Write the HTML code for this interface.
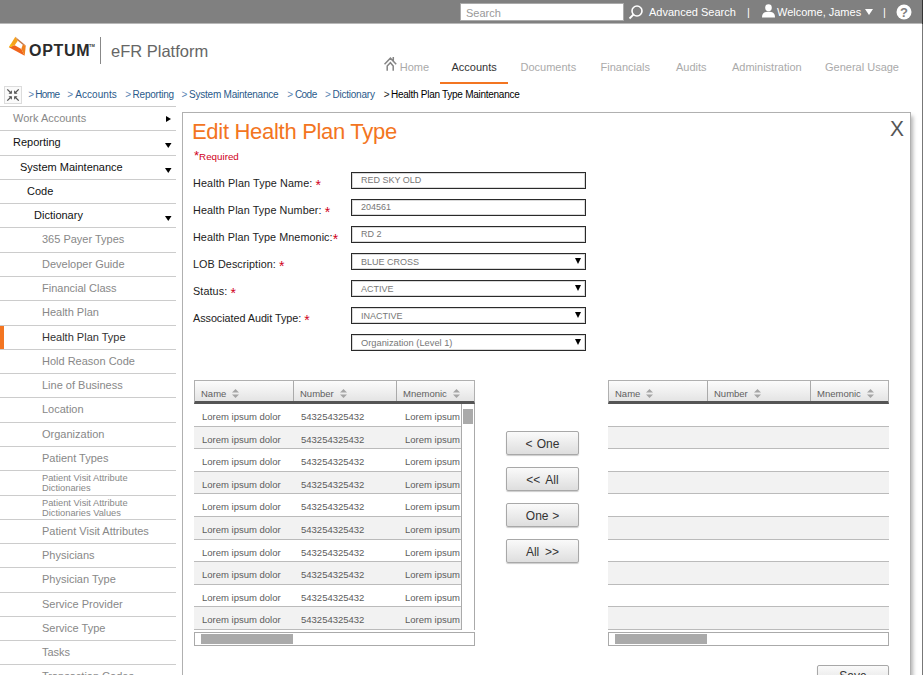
<!DOCTYPE html>
<html>
<head>
<meta charset="utf-8">
<title>Edit Health Plan Type</title>
<style>
*{box-sizing:border-box;margin:0;padding:0}
html,body{width:923px;height:675px;overflow:hidden;background:#fff;font-family:"Liberation Sans",Arial,sans-serif;color:#333}
.abs{position:absolute}
#topbar{position:absolute;left:0;top:0;width:923px;height:24px;background:#808080;border-bottom:1px solid #b8b8b8}
#search{position:absolute;left:460px;top:3px;width:164px;height:18px;background:#fff;border:1px solid #aaa;color:#999;font-size:11px;line-height:18px;padding-left:5px}
.tb{position:absolute;top:0;height:24px;line-height:24px;color:#fff;font-size:11px;white-space:nowrap}
#rightedge{position:absolute;left:922px;top:0;width:1px;height:675px;background:#777}
#rightedge i{display:block;height:24px;background:#333}
#logo{position:absolute;left:29px;top:41px;font-size:16px;font-weight:bold;color:#2b2b2b;letter-spacing:.7px;line-height:20px}
#logosep{position:absolute;left:100px;top:37px;width:1px;height:27px;background:#888}
#efr{position:absolute;left:111px;top:39.5px;font-size:16.5px;color:#666;line-height:22px;white-space:nowrap}
.nav{position:absolute;top:59px;font-size:11px;color:#aaa;line-height:16px;white-space:nowrap}
.nav.on{color:#333}
#navline{position:absolute;left:440px;top:82px;width:68px;height:2px;background:#f37521}
#bcicon{position:absolute;left:4px;top:86px;width:18px;height:18px;border:1px solid #dcdcdc;background:#fafafa}
.bc{position:absolute;top:88px;font-size:10px;line-height:13px;color:#2a5a8a;white-space:nowrap;letter-spacing:-.1px}
.bc.last{color:#000}.bc.g{color:#5a86b4}.bc.g.last{color:#222}
#side{position:absolute;left:0;top:106px;width:176px}
.si{position:relative;height:24.29px;border-top:1px solid #ccc;font-size:11px;line-height:22px;color:#888;white-space:nowrap}
.si.d{color:#111}
.si.two{font-size:9.3px;line-height:10px;padding-top:2px}
.si .ar{position:absolute;left:166px;top:9px}.si .ar.dn{left:165px;top:12px}
#panel{position:absolute;left:182px;top:112px;width:729px;height:580px;background:#fff;border:1px solid #b0b0b0;box-shadow:3px 3px 4px -1px rgba(0,0,0,.3)}
h1{position:absolute;left:192px;top:118px;letter-spacing:-.3px;font-size:22px;font-weight:normal;color:#f37521;line-height:27px;white-space:nowrap}
#close{position:absolute;left:890px;top:116.5px;font-size:22px;color:#555;line-height:24px;transform:scaleX(.95);transform-origin:0 0}
#req{position:absolute;left:194px;top:151px;font-size:9.8px;color:#d0021b;line-height:11px}
.lb{position:absolute;left:193px;font-size:10.8px;color:#222;line-height:13px;white-space:nowrap}
.lb b{color:#d0021b;font-weight:normal;font-size:14px;line-height:8px;vertical-align:-3px}
.inp{position:absolute;left:351px;width:235px;height:17px;border:1px solid #2a2a2a;box-shadow:inset 0 0 0 1px rgba(0,0,0,.15);background:#fff;font-size:9px;color:#777;line-height:15px;padding-left:9px}
.inp.sel{line-height:16.5px}.inp .dd{position:absolute;right:4.5px;top:4px;width:0;height:0;border:3px solid transparent;border-top:6px solid #000;border-bottom:0}
</style>
</head>
<body>
<div id="topbar"></div>
<div id="search">Search</div>
<svg class="abs" style="left:628px;top:4px" width="16" height="16" viewBox="0 0 16 16"><circle cx="9" cy="7" r="5" fill="none" stroke="#fff" stroke-width="1.6"/><path d="M5.5 10.5 L1.5 14.5" stroke="#fff" stroke-width="1.8"/></svg>
<div class="tb" style="left:649px">Advanced Search</div>
<div class="tb" style="left:747px">|</div>
<svg class="abs" style="left:761.5px;top:4px" width="13" height="14.5" viewBox="0 0 13 14" preserveAspectRatio="none"><circle cx="6.5" cy="3.6" r="3.3" fill="#fff"/><path d="M0 13 C0 8.5 3 7.5 6.5 7.5 C10 7.5 13 8.5 13 13 Z" fill="#fff"/></svg>
<div class="tb" style="left:777px">Welcome, James</div>
<svg class="abs" style="left:865px;top:9px" width="8" height="6" viewBox="0 0 8 6"><path d="M0 0 H8 L4 6 Z" fill="#fff"/></svg>
<div class="tb" style="left:883px">|</div>
<svg class="abs" style="left:895.7px;top:3.6px" width="16" height="16" viewBox="0 0 16 16"><circle cx="8" cy="8" r="7.5" fill="#fff"/><text x="8" y="12.5" font-family="Liberation Sans, sans-serif" font-size="13" font-weight="bold" fill="#808080" text-anchor="middle">?</text></svg>
<div id="rightedge"><i></i></div>

<svg class="abs" style="left:8px;top:36px" width="19" height="21" viewBox="0 0 19 21"><path d="M7.3 0.7 L0.9 11.3 L6.7 9.3 L9.8 4.7 Z" fill="#f7a21b"/><path d="M0.9 11.3 L16.7 19.8 L13.3 13.1 L6.7 9.3 Z" fill="#f0641c"/><path d="M16.7 19.8 L17.8 9.6 L14.7 8.7 L13.3 13.1 Z" fill="#f0801c"/><path d="M17.8 9.6 L7.3 0.7 L9.8 4.7 L14.7 8.7 Z" fill="#c77a4a"/><path d="M0.9 11.3 L3 8 L5 10 Z" fill="#f5c211"/></svg>
<div id="logo">OPTUM</div>
<div class="abs" style="left:89px;top:43px;font-size:4px;color:#333;line-height:5px;font-weight:bold">TM</div>
<div id="logosep"></div>
<div id="efr">eFR Platform</div>

<svg class="abs" style="left:384px;top:56px" width="14" height="16" viewBox="0 0 14 16"><path d="M0.5 8.3 L6.4 2.2 L12.2 8.3 M3.2 14.8 V10 L6.4 6.7 L9.2 10 V14.8 M9.3 1.1 V5" fill="none" stroke="#858585" stroke-width="1.5"/></svg>
<div class="nav" style="left:399.7px">Home</div>
<div class="nav on" style="left:451.5px">Accounts</div>
<div class="nav" style="left:520.5px">Documents</div>
<div class="nav" style="left:600.5px">Financials</div>
<div class="nav" style="left:676px">Audits</div>
<div class="nav" style="left:732px">Administration</div>
<div class="nav" style="left:825px">General Usage</div>
<div id="navline"></div>

<div id="bcicon"><svg width="16" height="16" viewBox="0 0 16 16"><path d="M2.3 2.4 L6 6 M13.7 2.4 L10 6 M2.3 13.6 L6 10 M13.7 13.6 L10 10" fill="none" stroke="#555" stroke-width="1.3"/><path d="M6.9 6.7 V3.3 L3.5 6.7 Z M9.1 6.7 V3.3 L12.5 6.7 Z M6.9 9.3 V12.7 L3.5 9.3 Z M9.1 9.3 V12.7 L12.5 9.3 Z" fill="#555"/></svg></div>
<div class="bc g" style="left:28.2px">&gt;</div><div class="bc" style="left:35.2px;letter-spacing:-0.6px">Home</div>
<div class="bc g" style="left:67.3px">&gt;</div><div class="bc" style="left:75.2px;letter-spacing:0.06px">Accounts</div>
<div class="bc g" style="left:125.3px">&gt;</div><div class="bc" style="left:132.6px;letter-spacing:-0.24px">Reporting</div>
<div class="bc g" style="left:181.4px">&gt;</div><div class="bc" style="left:189px;letter-spacing:-0.22px">System Maintenance</div>
<div class="bc g" style="left:287.3px">&gt;</div><div class="bc" style="left:294.9px;letter-spacing:-0.53px">Code</div>
<div class="bc g" style="left:324.9px">&gt;</div><div class="bc" style="left:332.5px;letter-spacing:-0.23px">Dictionary</div>
<div class="bc g last" style="left:383.8px">&gt;</div><div class="bc last" style="left:391px;letter-spacing:-0.27px">Health Plan Type Maintenance</div>

<div id="side">
<div class="si" style="padding-left:13px">Work Accounts<svg class="ar" width="5" height="6" viewBox="0 0 5 7" preserveAspectRatio="none"><path d="M0 0 L5 3.5 L0 7 Z" fill="#000"/></svg></div>
<div class="si d" style="padding-left:13px">Reporting<svg class="ar dn" width="6.5" height="5" viewBox="0 0 7 5" preserveAspectRatio="none"><path d="M0 0 H7 L3.5 5 Z" fill="#000"/></svg></div>
<div class="si d" style="padding-left:20px">System Maintenance<svg class="ar dn" width="6.5" height="5" viewBox="0 0 7 5" preserveAspectRatio="none"><path d="M0 0 H7 L3.5 5 Z" fill="#000"/></svg></div>
<div class="si d" style="padding-left:27px">Code</div>
<div class="si d" style="padding-left:34px">Dictionary<svg class="ar dn" width="6.5" height="5" viewBox="0 0 7 5" preserveAspectRatio="none"><path d="M0 0 H7 L3.5 5 Z" fill="#000"/></svg></div>
<div class="si" style="padding-left:42px">365 Payer Types</div>
<div class="si" style="padding-left:42px">Developer Guide</div>
<div class="si" style="padding-left:42px">Financial Class</div>
<div class="si" style="padding-left:42px">Health Plan</div>
<div class="si d" style="padding-left:42px;color:#333"><span class="abs" style="left:0;top:0;width:4px;height:23px;background:#f37521"></span>Health Plan Type</div>
<div class="si" style="padding-left:42px">Hold Reason Code</div>
<div class="si" style="padding-left:42px">Line of Business</div>
<div class="si" style="padding-left:42px">Location</div>
<div class="si" style="padding-left:42px">Organization</div>
<div class="si" style="padding-left:42px">Patient Types</div>
<div class="si two" style="padding-left:42px">Patient Visit Attribute<br>Dictionaries</div>
<div class="si two" style="padding-left:42px">Patient Visit Attribute<br>Dictionaries Values</div>
<div class="si" style="padding-left:42px">Patient Visit Attributes</div>
<div class="si" style="padding-left:42px">Physicians</div>
<div class="si" style="padding-left:42px">Physician Type</div>
<div class="si" style="padding-left:42px">Service Provider</div>
<div class="si" style="padding-left:42px">Service Type</div>
<div class="si" style="padding-left:42px">Tasks</div>
<div class="si" style="padding-left:42px">Transaction Codes</div>
</div>

<div id="panel"></div>
<h1>Edit Health Plan Type</h1>
<div id="close">X</div>
<div id="req"><span style="font-size:13px;line-height:8px;vertical-align:0px">*</span>Required</div>

<div class="lb" style="top:177px;letter-spacing:0.12px">Health Plan Type Name: <b>*</b></div>
<div class="lb" style="top:204px;letter-spacing:0.09px">Health Plan Type Number: <b>*</b></div>
<div class="lb" style="top:231px;letter-spacing:0.07px">Health Plan Type Mnemonic:<b>*</b></div>
<div class="lb" style="top:258px;letter-spacing:0.08px">LOB Description: <b>*</b></div>
<div class="lb" style="top:285px;letter-spacing:0.1px">Status: <b>*</b></div>
<div class="lb" style="top:312px;letter-spacing:-0.04px">Associated Audit Type: <b>*</b></div>

<div class="inp" style="top:172px">RED SKY OLD</div>
<div class="inp" style="top:199px">204561</div>
<div class="inp" style="top:226px">RD 2</div>
<div class="inp sel" style="top:253px">BLUE CROSS<span class="dd"></span></div>
<div class="inp sel" style="top:280px">ACTIVE<span class="dd"></span></div>
<div class="inp sel" style="top:307px">INACTIVE<span class="dd"></span></div>
<div class="inp sel" style="top:334px;font-size:9.3px">Organization (Level 1)<span class="dd"></span></div>


<style>
.tbl{position:absolute;top:380px;width:281px;height:250px;overflow:hidden}
.th{position:absolute;left:0;top:0;width:100%;height:24px;background:linear-gradient(#fcfcfc,#e4e4e4);border:1px solid #b0b0b0;border-bottom:3px solid #555}
.th .c{position:absolute;top:0;height:20px;border-right:1px solid #aaa;font-size:9.5px;line-height:26px;color:#606060;padding-left:6px;white-space:nowrap}
.so{margin-left:3.5px;vertical-align:-0.5px}
.rows{position:absolute;left:0;top:24px;width:100%}
.r{position:relative;height:22.6px;border-bottom:1px solid #bbb;background:#fff;font-size:9.5px;line-height:25px;color:#5c5c5c;white-space:nowrap;overflow:hidden}
.r.g{background:#f2f2f2}
.r span{position:absolute;top:0}
.vs{position:absolute;left:267px;top:24px;width:14px;height:226px;background:#fff;border-left:1px solid #aaa;border-right:1px solid #aaa}
.vs i{position:absolute;left:1px;top:5px;width:9.5px;height:15px;background:#aaa}
.hs{position:absolute;top:632px;width:281px;height:14px;border:1px solid #aaa;background:#fff}
.hs i{position:absolute;left:6px;top:1px;width:92px;height:10px;background:#aaa}
.btn{position:absolute;left:506px;width:73px;height:24px;border-radius:2px;border:1px solid #a8a8a8;background:linear-gradient(#fafafa,#dedede);font-size:12px;line-height:24px;text-align:center;color:#333;box-shadow:0 1px 1px rgba(0,0,0,.2)}
</style>
<div class="tbl" style="left:194px"><div class="th"><span class="c" style="left:0;width:99px">Name <svg class="so" width="7" height="9" viewBox="0 0 7 9"><path d="M3.5 0 L7 3.5 H0 Z M0 5.5 H7 L3.5 9 Z" fill="#a5a5a5"/></svg></span><span class="c" style="left:99px;width:103px">Number <svg class="so" width="7" height="9" viewBox="0 0 7 9"><path d="M3.5 0 L7 3.5 H0 Z M0 5.5 H7 L3.5 9 Z" fill="#a5a5a5"/></svg></span><span class="c" style="left:202px;width:79px;border-right:0">Mnemonic <svg class="so" width="7" height="9" viewBox="0 0 7 9"><path d="M3.5 0 L7 3.5 H0 Z M0 5.5 H7 L3.5 9 Z" fill="#a5a5a5"/></svg></span></div><div class="rows">
<div class="r"><span style="left:8px">Lorem ipsum dolor</span><span style="left:107px">543254325432</span><span style="left:211px">Lorem ipsum</span></div>
<div class="r g"><span style="left:8px">Lorem ipsum dolor</span><span style="left:107px">543254325432</span><span style="left:211px">Lorem ipsum</span></div>
<div class="r"><span style="left:8px">Lorem ipsum dolor</span><span style="left:107px">543254325432</span><span style="left:211px">Lorem ipsum</span></div>
<div class="r g"><span style="left:8px">Lorem ipsum dolor</span><span style="left:107px">543254325432</span><span style="left:211px">Lorem ipsum</span></div>
<div class="r"><span style="left:8px">Lorem ipsum dolor</span><span style="left:107px">543254325432</span><span style="left:211px">Lorem ipsum</span></div>
<div class="r g"><span style="left:8px">Lorem ipsum dolor</span><span style="left:107px">543254325432</span><span style="left:211px">Lorem ipsum</span></div>
<div class="r"><span style="left:8px">Lorem ipsum dolor</span><span style="left:107px">543254325432</span><span style="left:211px">Lorem ipsum</span></div>
<div class="r g"><span style="left:8px">Lorem ipsum dolor</span><span style="left:107px">543254325432</span><span style="left:211px">Lorem ipsum</span></div>
<div class="r"><span style="left:8px">Lorem ipsum dolor</span><span style="left:107px">543254325432</span><span style="left:211px">Lorem ipsum</span></div>
<div class="r g"><span style="left:8px">Lorem ipsum dolor</span><span style="left:107px">543254325432</span><span style="left:211px">Lorem ipsum</span></div>
</div><div class="vs"><i></i></div></div>
<div class="hs" style="left:194px"><i></i></div>
<div class="tbl" style="left:608px"><div class="th"><span class="c" style="left:0;width:99px">Name <svg class="so" width="7" height="9" viewBox="0 0 7 9"><path d="M3.5 0 L7 3.5 H0 Z M0 5.5 H7 L3.5 9 Z" fill="#a5a5a5"/></svg></span><span class="c" style="left:99px;width:103px">Number <svg class="so" width="7" height="9" viewBox="0 0 7 9"><path d="M3.5 0 L7 3.5 H0 Z M0 5.5 H7 L3.5 9 Z" fill="#a5a5a5"/></svg></span><span class="c" style="left:202px;width:79px;border-right:0">Mnemonic <svg class="so" width="7" height="9" viewBox="0 0 7 9"><path d="M3.5 0 L7 3.5 H0 Z M0 5.5 H7 L3.5 9 Z" fill="#a5a5a5"/></svg></span></div><div class="rows">
<div class="r"></div>
<div class="r g"></div>
<div class="r"></div>
<div class="r g"></div>
<div class="r"></div>
<div class="r g"></div>
<div class="r"></div>
<div class="r g"></div>
<div class="r"></div>
<div class="r g"></div>
</div></div>
<div class="hs" style="left:608px"><i></i></div>
<div class="btn" style="top:431px;word-spacing:.8px">&lt; One</div>
<div class="btn" style="top:467px;word-spacing:2.4px">&lt;&lt; All</div>
<div class="btn" style="top:503px;word-spacing:.3px">One &gt;</div>
<div class="btn" style="top:539px;word-spacing:2.4px">All &gt;&gt;</div>
<div class="btn" style="left:817px;top:665px;width:72px;line-height:21.5px">Save</div>

</body>
</html>
